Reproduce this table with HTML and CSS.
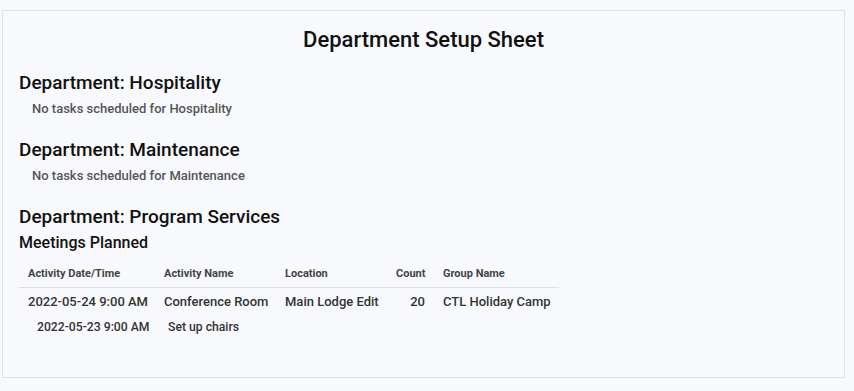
FILE: index.html
```html
<!DOCTYPE html>
<html lang="en">
<head>
<meta charset="utf-8">
<title>Department Setup Sheet</title>
<link rel="stylesheet" href="styles.css">
</head>
<body>
  <main class="sheet">
    <h1 class="sheet-title">Department Setup Sheet</h1>

    <section class="dept">
      <h2 class="dept-name">Department: Hospitality</h2>
      <p class="dept-empty">No tasks scheduled for Hospitality</p>
    </section>

    <section class="dept">
      <h2 class="dept-name">Department: Maintenance</h2>
      <p class="dept-empty">No tasks scheduled for Maintenance</p>
    </section>

    <section class="dept">
      <h2 class="dept-name">Department: Program Services</h2>
      <h3 class="dept-sub">Meetings Planned</h3>
      <table class="meetings">
        <colgroup>
          <col class="c-date">
          <col class="c-name">
          <col class="c-loc">
          <col class="c-count">
          <col class="c-group">
        </colgroup>
        <thead>
          <tr>
            <th>Activity Date/Time</th>
            <th>Activity Name</th>
            <th>Location</th>
            <th class="num">Count</th>
            <th>Group Name</th>
          </tr>
        </thead>
        <tbody>
          <tr class="meeting">
            <td>2022-05-24 9:00 AM</td>
            <td>Conference Room</td>
            <td>Main Lodge Edit</td>
            <td class="num">20</td>
            <td>CTL Holiday Camp</td>
          </tr>
          <tr class="task">
            <td class="task-date">2022-05-23 9:00 AM</td>
            <td class="task-name" colspan="4">Set up chairs</td>
          </tr>
        </tbody>
      </table>
    </section>
  </main>
</body>
</html>
```

FILE: styles.css
```css
html, body {
  margin: 0;
  padding: 0;
  background: #f8f9fd;
}

body {
  font-family: Roboto, "Noto Sans", Arial, sans-serif;
  color: #111;
  height: 391px;
  overflow: hidden;
}

.sheet {
  box-sizing: border-box;
  width: 843px;
  height: 368px;
  margin: 10px 0 0 2px;
  padding: 17px 16px 0 16px;
  border: 1px solid #dfe1e6;
  background: #f8f9fd;
}

.sheet-title {
  margin: 0;
  font-size: 22px;
  line-height: 24px;
  font-weight: 500;
  text-align: center;
  color: #111;
}

.dept-name {
  margin: 20px 0 0;
  font-size: 19px;
  line-height: 22px;
  font-weight: 500;
  color: #111;
}

.dept + .dept .dept-name {
  margin-top: 22px;
}

.dept-empty {
  margin: 7px 0 0 13px;
  font-size: 13px;
  line-height: 16px;
  font-weight: 500;
  color: #555;
}

.dept-sub {
  margin: 6px 0 0;
  font-size: 16px;
  line-height: 18px;
  font-weight: 500;
  color: #111;
}

.meetings {
  margin-top: 8px;
  width: 540px;
  border-collapse: collapse;
  table-layout: fixed;
}

.c-date { width: 136px; }
.c-name { width: 121px; }
.c-loc { width: 111px; }
.c-count { width: 47px; }
.c-group { width: 125px; }

.meetings th {
  padding: 7px 9px 6px;
  font-size: 11px;
  line-height: 14px;
  font-weight: 700;
  color: #444;
  text-align: left;
  white-space: nowrap;
  border-bottom: 1px solid #dde0e5;
}

.meetings td {
  font-size: 13px;
  line-height: 16px;
  font-weight: 500;
  color: #333;
  white-space: nowrap;
}

.meeting td {
  padding: 6px 9px 4px;
}

.meetings .num {
  text-align: right;
}

.task td {
  padding: 5px 9px 0;
  font-size: 12.2px;
}

.task .task-date {
  padding-left: 18px;
}

.task .task-name {
  padding-left: 13px;
}
```
